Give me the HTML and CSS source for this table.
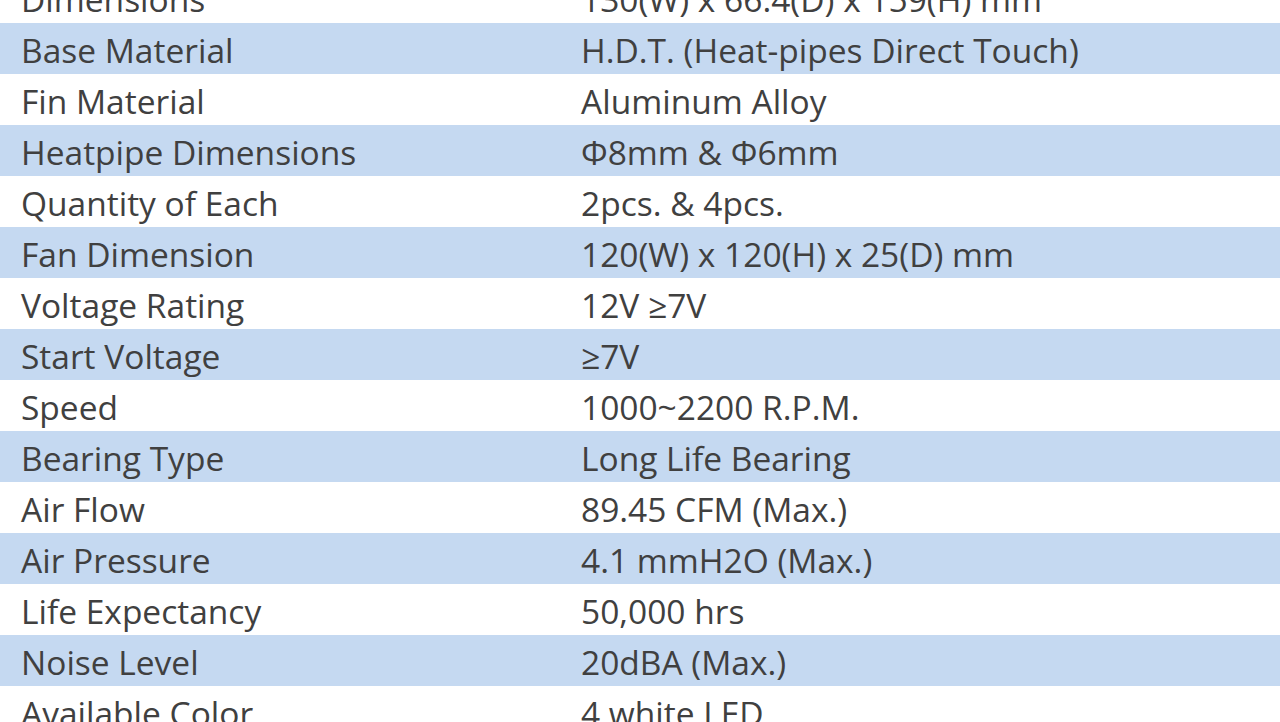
FILE: index.html
```html
<!DOCTYPE html>
<html>
<head>
<meta charset="utf-8">
<link rel="stylesheet" href="styles.css">
</head>
<body>
<div class="specs">
  <div class="row"><div class="k">Dimensions</div><div class="v">130(W) x 66.4(D) x 159(H) mm</div></div>
  <div class="row alt"><div class="k">Base Material</div><div class="v">H.D.T. (Heat-pipes Direct Touch)</div></div>
  <div class="row"><div class="k">Fin Material</div><div class="v">Aluminum Alloy</div></div>
  <div class="row alt"><div class="k">Heatpipe Dimensions</div><div class="v">Φ8mm &amp; Φ6mm</div></div>
  <div class="row"><div class="k">Quantity of Each</div><div class="v">2pcs. &amp; 4pcs.</div></div>
  <div class="row alt"><div class="k">Fan Dimension</div><div class="v">120(W) x 120(H) x 25(D) mm</div></div>
  <div class="row"><div class="k">Voltage Rating</div><div class="v">12V ≥7V</div></div>
  <div class="row alt"><div class="k">Start Voltage</div><div class="v">≥7V</div></div>
  <div class="row"><div class="k">Speed</div><div class="v">1000~2200 R.P.M.</div></div>
  <div class="row alt"><div class="k">Bearing Type</div><div class="v">Long Life Bearing</div></div>
  <div class="row"><div class="k">Air Flow</div><div class="v">89.45 CFM (Max.)</div></div>
  <div class="row alt"><div class="k">Air Pressure</div><div class="v">4.1 mmH2O (Max.)</div></div>
  <div class="row"><div class="k">Life Expectancy</div><div class="v">50,000 hrs</div></div>
  <div class="row alt"><div class="k">Noise Level</div><div class="v">20dBA (Max.)</div></div>
  <div class="row"><div class="k">Available Color</div><div class="v">4 white LED</div></div>
</div>
</body>
</html>
```
FILE: styles.css
```css
html, body {
  margin: 0;
  padding: 0;
  background: #ffffff;
  overflow: hidden;
}
.specs {
  margin-top: -28px;
  width: 1280px;
  font-family: "Open Sans", "Liberation Sans", sans-serif;
  font-size: 33.5px;
  color: #404040;
}
.row {
  display: grid;
  grid-template-columns: 560px 1fr;
  height: 51px;
}
.row.alt {
  background: #c5d9f1;
}
.k, .v {
  padding-left: 21px;
  padding-top: 4px;
  white-space: nowrap;
  line-height: 47px;
}
```
